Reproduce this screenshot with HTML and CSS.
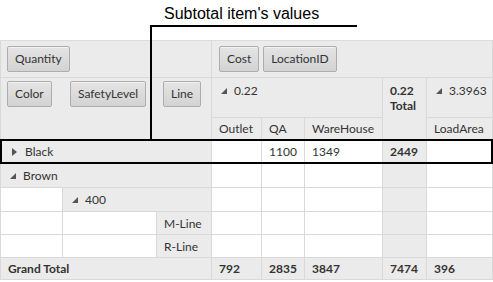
FILE: index.html
```html
<!DOCTYPE html>
<html lang="en">
<head>
    <meta charset="UTF-8">
    <title>Pivot Grid - Subtotal item's values</title>
    <link rel="stylesheet" href="styles.css">
</head>
<body>

    <div class="callout">
        <span class="callout-text">Subtotal item's values</span>
        <div class="callout-line"></div>
        <div class="callout-drop"></div>
    </div>

    <div class="pivot-wrap">
        <div class="highlight-row"></div>

        <table class="pivot">
            <colgroup>
                <col style="width:62px"><col style="width:94px"><col style="width:55px">
                <col style="width:50px"><col style="width:43px"><col style="width:78px">
                <col style="width:44px"><col style="width:66px">
            </colgroup>

            <!-- data fields / column fields -->
            <tr class="r-fields">
                <td colspan="3" class="hdr pad-btn"><span class="field-btn">Quantity</span></td>
                <td colspan="5" class="hdr pad-col-btn">
                    <span class="field-btn">Cost</span><span class="field-btn">LocationID</span>
                </td>
            </tr>

            <!-- row fields + column headers -->
            <tr class="r-colhead">
                <td colspan="3" rowspan="2" class="hdr row-fields">
                    <div class="row-field-grid">
                        <div><span class="field-btn">Color</span></div>
                        <div><span class="field-btn">SafetyLevel</span></div>
                        <div><span class="field-btn">Line</span></div>
                    </div>
                </td>
                <td colspan="3" class="hdr top"><span class="exp"></span>0.22</td>
                <td rowspan="2" class="hdr top bold">0.22<br>Total</td>
                <td class="hdr top"><span class="exp"></span>3.3963</td>
            </tr>
            <tr class="r-sub">
                <td class="hdr">Outlet</td>
                <td class="hdr">QA</td>
                <td class="hdr">WareHouse</td>
                <td class="hdr">LoadArea</td>
            </tr>

            <!-- body -->
            <tr class="r-24">
                <td colspan="3" class="hdr"><span class="col-tri"></span>Black</td>
                <td></td>
                <td>1100</td>
                <td>1349</td>
                <td class="total bold">2449</td>
                <td></td>
            </tr>
            <tr class="r-24">
                <td colspan="3" class="hdr"><span class="exp"></span>Brown</td>
                <td></td><td></td><td></td><td class="total"></td><td></td>
            </tr>
            <tr class="r-24">
                <td></td>
                <td colspan="2" class="hdr"><span class="exp"></span>400</td>
                <td></td><td></td><td></td><td class="total"></td><td></td>
            </tr>
            <tr class="r-23">
                <td></td><td></td>
                <td class="hdr">M-Line</td>
                <td></td><td></td><td></td><td class="total"></td><td></td>
            </tr>
            <tr class="r-23">
                <td></td><td></td>
                <td class="hdr">R-Line</td>
                <td></td><td></td><td></td><td class="total"></td><td></td>
            </tr>
            <tr class="r-grand">
                <td colspan="3" class="hdr bold">Grand Total</td>
                <td class="hdr bold">792</td>
                <td class="hdr bold">2835</td>
                <td class="hdr bold">3847</td>
                <td class="hdr bold">7474</td>
                <td class="hdr bold">396</td>
            </tr>
        </table>
    </div>

</body>
</html>
```

FILE: styles.css
```css
/* --- BASE --- */
body {
    margin: 0;
    padding: 0;
    background: #ffffff;
    color: #333;
    font-family: 'Lato', 'Noto Sans', sans-serif;
    font-size: 12px;
}

/* --- CALLOUT (annotation above the grid) --- */
.callout {
    height: 40px;
    position: relative;
}

.callout-text {
    position: absolute;
    left: 164px;
    top: 5px;
    font-family: 'Liberation Sans', Arial, sans-serif;
    font-size: 16px;
    color: #000;
}

.callout-line {
    position: absolute;
    left: 151px;
    top: 25px;
    width: 206px;
    height: 2px;
    background: #000;
}

.callout-drop {
    position: absolute;
    left: 150px;
    top: 25px;
    width: 2px;
    height: 115px;
    background: #000;
    z-index: 5;
}

/* --- PIVOT GRID --- */
.pivot-wrap {
    position: relative;
}

.highlight-row {
    position: absolute;
    left: 0;
    right: 0;
    top: 99px;
    height: 21px;
    border: 2px solid #000;
    pointer-events: none;
    z-index: 4;
}

.pivot {
    width: 492px;
    table-layout: fixed;
    border-collapse: collapse;
}

.pivot td {
    border: 1px solid #d9d9d9;
    padding: 0 0 0 7px;
    background: #fff;
    white-space: nowrap;
    overflow: hidden;
    vertical-align: middle;
}

.pivot td.hdr,
.pivot td.total {
    background: #ebebeb;
}

.pivot tr:first-child td {
    border-top-color: #dcdcdc;
}

.bold {
    font-weight: 700;
}

.r-fields { height: 37px; }
.r-colhead { height: 40px; }
.r-sub { height: 22px; }
.r-24 { height: 24px; }
.r-23 { height: 23px; }
.r-grand { height: 22px; }

.pivot td.top {
    vertical-align: top;
    padding-top: 5px;
    line-height: 15px;
}

.pivot td.pad-btn {
    padding-left: 6px;
}

.pivot td.pad-col-btn {
    padding-left: 7px;
}

.pivot td.row-fields {
    vertical-align: top;
    padding: 3px 0 0 0;
}

.row-field-grid {
    display: grid;
    grid-template-columns: 62px 94px 1fr;
}

.row-field-grid > div {
    padding-left: 6px;
}

.row-field-grid > div:nth-child(2) {
    padding-left: 7px;
}

/* --- FIELD BUTTONS --- */
.field-btn {
    display: inline-block;
    height: 24px;
    line-height: 24px;
    padding: 0 7px;
    margin-right: 4px;
    border: 1px solid #adadad;
    border-radius: 2px;
    background: linear-gradient(#e4e4e4, #d3d3d3);
    box-shadow: inset 0 1px 0 #f2f2f2;
    color: #333;
}

/* --- EXPAND / COLLAPSE GLYPHS --- */
.exp {
    display: inline-block;
    width: 0;
    height: 0;
    border-left: 6px solid transparent;
    border-bottom: 6px solid #555;
    margin: 0 7px 1px 2px;
    vertical-align: middle;
}

.col-tri {
    display: inline-block;
    width: 0;
    height: 0;
    border-top: 4px solid transparent;
    border-bottom: 4px solid transparent;
    border-left: 5px solid #555;
    margin: 0 8px 1px 4px;
    vertical-align: middle;
}
```
